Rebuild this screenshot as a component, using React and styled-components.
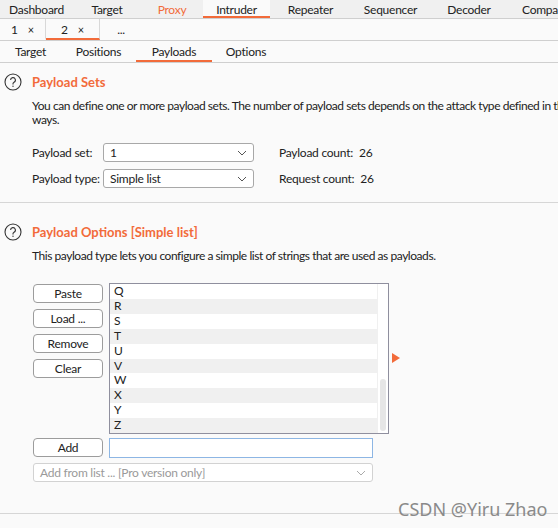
import React from "react";
import styled, { createGlobalStyle } from "styled-components";

const Global = createGlobalStyle`
  html, body { margin: 0; padding: 0; background: #fafafa; }
  body { font-family: Lato, "Liberation Sans", sans-serif; font-size: 12px; color: #222; letter-spacing: -0.25px; }
  * { box-sizing: border-box; }
`;

const Page = styled.div`
  width: 558px;
  height: 528px;
  overflow: hidden;
  position: relative;
  background: #fafafa;
`;

const TabBar = styled.div`
  display: flex;
  height: ${(p) => p.$h}px;
  background: ${(p) => p.$bg};
  border-bottom: 1px solid #cfcfcf;
  white-space: nowrap;
`;

const Tab = styled.div`
  display: flex;
  align-items: center;
  justify-content: center;
  width: ${(p) => p.$w}px;
  flex: none;
  color: ${(p) => (p.$orange ? "#f26b3a" : "#222")};
  background: ${(p) => (p.$active ? "#fafafa" : "transparent")};
  border-bottom: 2px solid ${(p) => (p.$active ? "#f26b3a" : "transparent")};
  border-right: ${(p) => (p.$sep ? "1px solid #d8d8d8" : "none")};
  padding-top: 2px;
  gap: 10px;
`;

const Close = styled.span`
  font-size: 11px;
`;

const Section = styled.div`
  padding: 10px 0 0 4px;
  border-bottom: 1px solid #d6d6d6;
  height: ${(p) => p.$h}px;
`;

const Heading = styled.div`
  display: flex;
  align-items: center;
  gap: 10px;
  height: 18px;
  margin-top: ${(p) => p.$top || 0}px;
`;

const Title = styled.div`
  color: #f26b3a;
  font-weight: bold;
  font-size: 13px;
  letter-spacing: 0;
`;

const Body = styled.div`
  padding-left: 28px;
`;

const Desc = styled.div`
  margin-top: 8px;
  line-height: 14px;
  white-space: nowrap;
  letter-spacing: -0.45px;
`;

const FormGrid = styled.div`
  display: grid;
  grid-template-columns: 71px 151px 25px auto;
  row-gap: 7px;
  align-items: center;
  margin-top: 16px;
`;

const Label = styled.div``;

const Select = styled.div`
  height: 19px;
  width: ${(p) => p.$w || 151}px;
  border: 1px solid ${(p) => (p.$disabled ? "#d2d2d2" : "#a8a8a8")};
  border-radius: 3px;
  background: #fff;
  display: flex;
  align-items: center;
  justify-content: space-between;
  padding: 0 6px 0 6px;
  color: ${(p) => (p.$disabled ? "#9a9a9a" : "#222")};
`;

const Count = styled.div`
  grid-column: 4;
  display: flex;
  gap: 6px;
`;

const Editor = styled.div`
  display: grid;
  grid-template-columns: 70px auto;
  column-gap: 6px;
  margin-top: 20px;
  margin-left: 1px;
`;

const Buttons = styled.div`
  display: flex;
  flex-direction: column;
  gap: 6px;
  padding-top: 1px;
`;

const Button = styled.div`
  height: 19px;
  width: 70px;
  border: 1px solid #9c9c9c;
  border-radius: 4px;
  background: #fff;
  display: flex;
  align-items: center;
  justify-content: center;
`;

const ListRow = styled.div`
  display: flex;
  align-items: flex-start;
`;

const List = styled.div`
  width: 280px;
  height: 151px;
  border: 1px solid #8f8f9e;
  background: #fff;
  display: flex;
`;

const Items = styled.div`
  flex: 1;
  display: flex;
  flex-direction: column;
`;

const Item = styled.div`
  height: 15px;
  line-height: 14px;
  padding-left: 4px;
  background: ${(p) => (p.$odd ? "#f0f0f0" : "#fff")};
`;

const Scroll = styled.div`
  width: 11px;
  border-left: 1px solid #f0f0f0;
  display: flex;
  flex-direction: column;
  justify-content: flex-end;
  padding: 0 2px 2px 2px;
`;

const Thumb = styled.div`
  height: 52px;
  background: #e6e6e6;
  border-radius: 3px;
`;

const Arrow = styled.svg`
  margin: 70px 0 0 3px;
`;

const AddRow = styled.div`
  display: flex;
  gap: 6px;
  margin-top: 4px;
  margin-left: 1px;
`;

const Input = styled.div`
  width: 264px;
  height: 20px;
  border: 1px solid #8db6e4;
  background: #fff;
`;

const FromList = styled.div`
  margin-top: 5px;
  margin-left: 1px;
`;

const Watermark = styled.div`
  position: absolute;
  left: 398px;
  top: 497px;
  font-family: "Noto Sans", sans-serif;
  font-size: 18px;
  letter-spacing: 0;
  color: #8a8a8a;
`;

const Help = () => (
  <svg width="18" height="18" viewBox="0 0 18 18">
    <circle cx="9" cy="9" r="8" fill="none" stroke="#333" strokeWidth="1.1" />
    <path d="M6.6 7.1 a2.4 2.4 0 1 1 3.4 2.1 c-0.7 0.4 -1 0.8 -1 1.6 v0.6" fill="none" stroke="#333" strokeWidth="1.1" />
    <circle cx="9" cy="13.3" r="0.7" fill="#333" />
  </svg>
);

const Chevron = ({ color = "#555" }) => (
  <svg width="10" height="6" viewBox="0 0 10 6">
    <path d="M1 1 L5 5 L9 1" fill="none" stroke={color} strokeWidth="1" />
  </svg>
);

const letters = "QRSTUVWXYZ".split("");

export default function App() {
  return (
    <Page>
      <Global />
      <TabBar $h={19} $bg="#f0f0f0">
        <Tab $w={73}>Dashboard</Tab>
        <Tab $w={68}>Target</Tab>
        <Tab $w={62} $orange>Proxy</Tab>
        <Tab $w={67} $active>Intruder</Tab>
        <Tab $w={81}>Repeater</Tab>
        <Tab $w={79}>Sequencer</Tab>
        <Tab $w={78}>Decoder</Tab>
        <Tab $w={80} style={{ justifyContent: "flex-start", paddingLeft: 14 }}>Comparer</Tab>
      </TabBar>
      <TabBar $h={22} $bg="#fafafa">
        <Tab $w={46} $sep>1<Close>×</Close></Tab>
        <Tab $w={54} $active $sep>2<Close>×</Close></Tab>
        <Tab $w={42}>...</Tab>
      </TabBar>
      <TabBar $h={22} $bg="#fafafa">
        <Tab $w={61}>Target</Tab>
        <Tab $w={75}>Positions</Tab>
        <Tab $w={76} $active>Payloads</Tab>
        <Tab $w={68}>Options</Tab>
      </TabBar>

      <Section $h={140}>
        <Heading>
          <Help />
          <Title>Payload Sets</Title>
        </Heading>
        <Body>
          <Desc>
            You can define one or more payload sets. The number of payload sets depends on the attack type defined in the Positions tab. Various payload types are available for each payload set, and each payload type can be customized in different
            <br />
            ways.
          </Desc>
          <FormGrid>
            <Label>Payload set:</Label>
            <Select>1<Chevron /></Select>
            <span />
            <Count><span>Payload count:</span><span>26</span></Count>
            <Label>Payload type:</Label>
            <Select>Simple list<Chevron /></Select>
            <span />
            <Count><span>Request count:</span><span>26</span></Count>
          </FormGrid>
        </Body>
      </Section>

      <Section $h={311}>
        <Heading $top={10}>
          <Help />
          <Title>Payload Options [Simple list]</Title>
        </Heading>
        <Body>
          <Desc>This payload type lets you configure a simple list of strings that are used as payloads.</Desc>
          <Editor>
            <Buttons>
              <Button>Paste</Button>
              <Button>Load ...</Button>
              <Button>Remove</Button>
              <Button>Clear</Button>
            </Buttons>
            <ListRow>
              <List>
                <Items>
                  {letters.map((l, i) => (
                    <Item key={l} $odd={i % 2 === 1}>{l}</Item>
                  ))}
                </Items>
                <Scroll><Thumb /></Scroll>
              </List>
              <Arrow width="8" height="10" viewBox="0 0 8 10">
                <path d="M0 0 L8 5 L0 10 Z" fill="#f26b3a" />
              </Arrow>
            </ListRow>
          </Editor>
          <AddRow>
            <Button>Add</Button>
            <Input />
          </AddRow>
          <FromList>
            <Select $w={340} $disabled>Add from list ... [Pro version only]<Chevron color="#aaa" /></Select>
          </FromList>
        </Body>
      </Section>
      <Watermark>CSDN @Yiru Zhao</Watermark>
    </Page>
  );
}
